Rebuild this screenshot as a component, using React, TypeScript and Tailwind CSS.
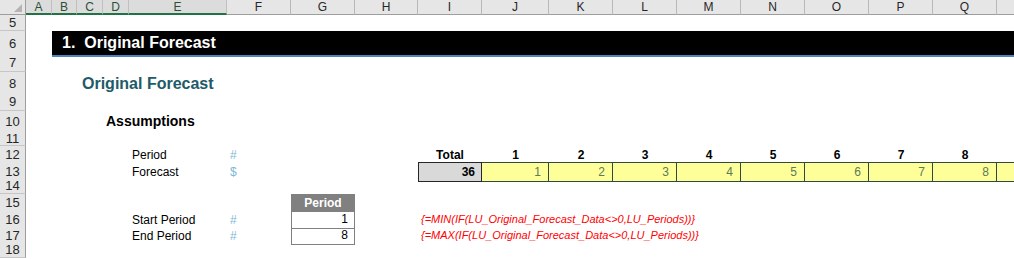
import React from "react";

const COLS =
  "grid grid-cols-[26px_26px_25px_26px_26px_98px_64px_64px_63px_64px_67px_64px_64px_64px_64px_64px_64px_64px_1fr]";

const letters = ["A", "B", "C", "D", "E", "F", "G", "H", "I", "J", "K", "L", "M", "N", "O", "P", "Q"];
const periods = [1, 2, 3, 4, 5, 6, 7, 8];

const RowHead = ({ n }: { n: number }) => (
  <div className="flex items-center justify-center bg-[#e6e6e6] border-r border-r-[#9e9e9e] border-b border-b-[#c6c6c6] text-[13px] leading-none text-[#262626]">
    {n}
  </div>
);

const Row = ({ n, h, children }: { n: number; h: string; children?: React.ReactNode }) => (
  <div className={`${COLS} ${h}`}>
    <RowHead n={n} />
    {children}
  </div>
);

const ColumnHeader = () => (
  <div className={`${COLS} h-[15px]`}>
    <div className="relative bg-[#e6e6e6] border-r border-[#9e9e9e] border-b">
      <svg className="absolute right-[3px] bottom-[2px]" width="8" height="8" viewBox="0 0 8 8">
        <polygon points="8,0 8,8 0,8" fill="#b4b4b4" />
      </svg>
    </div>
    {letters.map((l, i) =>
      i < 5 ? (
        <div
          key={l}
          className="flex items-center justify-center bg-[#dcdcdc] border-r border-r-[#c0c0c0] border-b-2 border-b-[#217346] text-[12px] leading-none text-[#2b4f38]"
        >
          {l}
        </div>
      ) : (
        <div
          key={l}
          className="flex items-center justify-center bg-[#e6e6e6] border-r border-r-[#b8b8b8] border-b border-b-[#9e9e9e] text-[12px] leading-none text-[#262626]"
        >
          {l}
        </div>
      )
    )}
    <div className="bg-[#e6e6e6] border-b border-[#9e9e9e]" />
  </div>
);

const Label = ({ children }: { children: React.ReactNode }) => (
  <div className="col-start-6 flex items-center pl-[3px] whitespace-nowrap text-[12px] text-black">{children}</div>
);

const Unit = ({ children }: { children: React.ReactNode }) => (
  <div className="col-start-7 flex items-center pl-[3px] text-[12px] text-[#7db9d4]">{children}</div>
);

export default function App() {
  return (
    <div className="w-[1014px] h-[259px] overflow-hidden bg-white font-['Liberation_Sans',Arial,sans-serif]">
      <ColumnHeader />

      <Row n={5} h="h-[16px]" />

      <Row n={6} h="h-[23px]">
        <div className="col-[3/-1] flex items-center bg-black border-b-2 border-[#4f81bd] pl-[10px] text-[16px] font-bold text-white whitespace-nowrap">
          1.&nbsp;&nbsp;Original Forecast
        </div>
      </Row>

      <Row n={7} h="h-[18px]" />

      <Row n={8} h="h-[20px]">
        <div className="col-[4/-1] flex items-center pl-[5px] text-[16px] font-bold text-[#215a68] whitespace-nowrap">
          Original Forecast
        </div>
      </Row>

      <Row n={9} h="h-[19px]" />

      <Row n={10} h="h-[20px]">
        <div className="col-[5/-1] flex items-center pl-[3px] text-[14px] font-bold text-black whitespace-nowrap">
          Assumptions
        </div>
      </Row>

      <Row n={11} h="h-[15px]" />

      <Row n={12} h="h-[16px]">
        <Label>Period</Label>
        <Unit>#</Unit>
        <div className="col-start-10 flex items-center justify-center text-[12px] font-bold text-black">Total</div>
        {periods.map((p) => (
          <div key={p} className="flex items-center justify-center text-[12px] font-bold text-black">
            {p}
          </div>
        ))}
      </Row>

      <Row n={13} h="h-[16px]">
        <Label>Forecast</Label>
        <Unit>$</Unit>
        <div className="col-start-10 flex items-center justify-end border border-[#262626] bg-[#d9d9d9] pr-[6px] text-[12px] font-bold text-black">
          36
        </div>
        {periods.map((p) => (
          <div
            key={p}
            className="flex items-center justify-end border-y border-r border-[#2d4a40] bg-[#ffff99] pr-[7px] text-[12px] text-[#5a7a5a]"
          >
            {p}
          </div>
        ))}
        <div className="border-y border-[#2d4a40] bg-[#ffff99]" />
      </Row>

      <Row n={14} h="h-[16px]" />

      <Row n={15} h="h-[16px]">
        <div className="col-start-8 flex items-center justify-center bg-[#808080] text-[12px] font-bold text-white">
          Period
        </div>
      </Row>

      <Row n={16} h="h-[16px]">
        <Label>Start Period</Label>
        <Unit>#</Unit>
        <div className="col-start-8 flex items-center justify-end border-x border-b border-[#808080] pr-[6px] text-[12px] text-black">
          1
        </div>
        <div className="col-[10/-1] flex items-center pl-[3px] text-[11px] italic text-[#ff0000] whitespace-nowrap">
          {"{=MIN(IF(LU_Original_Forecast_Data<>0,LU_Periods))}"}
        </div>
      </Row>

      <Row n={17} h="h-[16px]">
        <Label>End Period</Label>
        <Unit>#</Unit>
        <div className="col-start-8 flex items-center justify-end border-x border-b border-[#808080] pr-[6px] text-[12px] text-black">
          8
        </div>
        <div className="col-[10/-1] flex items-center pl-[3px] text-[11px] italic text-[#ff0000] whitespace-nowrap">
          {"{=MAX(IF(LU_Original_Forecast_Data<>0,LU_Periods))}"}
        </div>
      </Row>

      <Row n={18} h="h-[16px]" />
    </div>
  );
}
